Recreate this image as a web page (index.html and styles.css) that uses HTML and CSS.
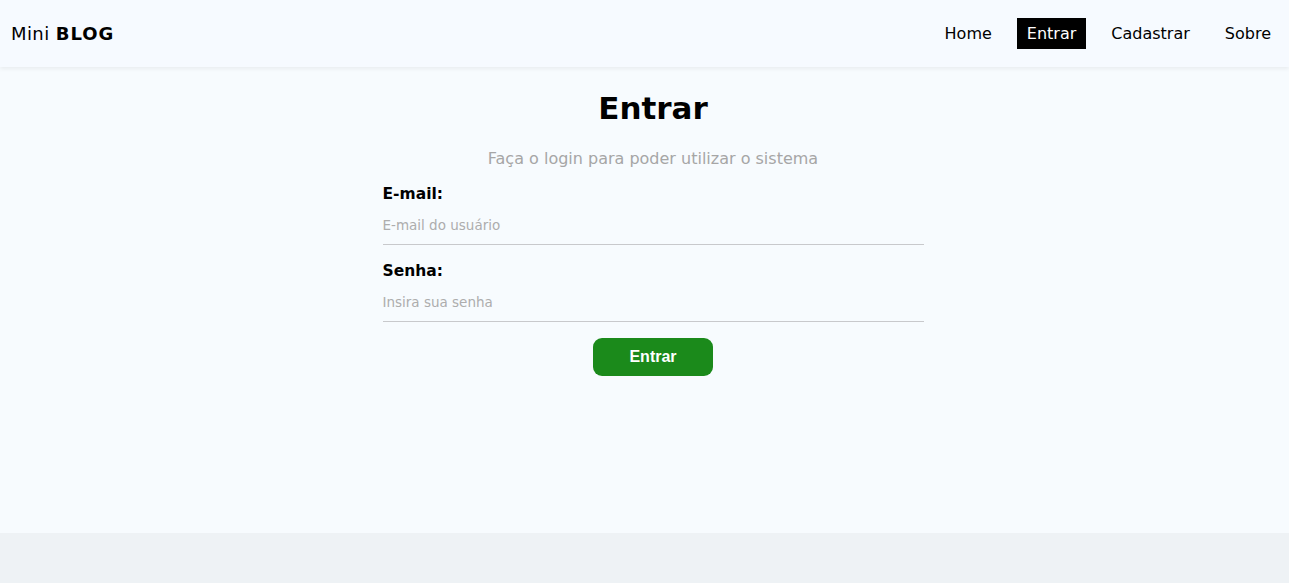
FILE: index.html
```html
<!DOCTYPE html>
<html lang="pt-BR">
<head>
<meta charset="utf-8">
<title>Mini Blog</title>
<link rel="stylesheet" href="styles.css">
</head>
<body>
<div class="app">
  <header class="navbar">
    <a class="brand" href="#">Mini <span>BLOG</span></a>
    <nav class="links">
      <a href="#">Home</a>
      <a href="#" class="active">Entrar</a>
      <a href="#">Cadastrar</a>
      <a href="#">Sobre</a>
    </nav>
  </header>
  <main class="container">
    <div class="login">
      <h1>Entrar</h1>
      <p class="sub">Faça o login para poder utilizar o sistema</p>
      <form class="form">
        <label class="field">
          <span>E-mail:</span>
          <input type="email" placeholder="E-mail do usuário">
        </label>
        <label class="field">
          <span>Senha:</span>
          <input type="password" placeholder="Insira sua senha">
        </label>
        <button type="button" class="btn">Entrar</button>
      </form>
    </div>
  </main>
</div>
</body>
</html>
```
FILE: styles.css
```css
* { box-sizing: border-box; }
html, body { margin: 0; padding: 0; }
body {
  background: #eef2f5;
  font-family: "DejaVu Sans", "Open Sans", sans-serif;
  color: #000;
}
.app {
  background: #f7fbfe;
  height: 533px;
}
.navbar {
  height: 67px;
  display: flex;
  align-items: center;
  justify-content: space-between;
  padding: 0 8px 0 11px;
  background: #f6faff;
  box-shadow: 0 2px 4px rgba(0,0,0,0.06);
}
.brand {
  color: #000;
  text-decoration: none;
  font-size: 18px;
  letter-spacing: 0.4px;
}
.brand span { font-weight: 900; letter-spacing: 1px; }
.links { display: flex; gap: 15px; }
.links a {
  color: #000;
  text-decoration: none;
  font-size: 16px;
  padding: 6px 10px;
  line-height: 19px;
}
.links a.active { background: #000; color: #fff; }
.container {
  display: flex;
  justify-content: center;
  padding-left: 17px;
}
.login {
  width: 541px;
  text-align: center;
}
h1 {
  margin: 21px 0 0;
  font-size: 31px;
  line-height: 40px;
  font-weight: 700;
}
.sub {
  margin: 20px 0 0;
  color: #a6a6a6;
  font-size: 16px;
  line-height: 22px;
}
.form {
  display: flex;
  flex-direction: column;
  align-items: center;
  margin-top: 14px;
}
.field {
  width: 100%;
  display: flex;
  flex-direction: column;
  text-align: left;
}
.field span {
  font-weight: 700;
  font-size: 15.5px;
  line-height: 20px;
}
.field input {
  border: none;
  border-bottom: 1px solid #c8c9cc;
  background: transparent;
  font-family: inherit;
  font-size: 13.5px;
  padding: 13px 0 11px;
  outline: none;
  margin-bottom: 16px;
}
.field input::placeholder { color: #adadad; }
.btn {
  margin-top: 0;
  width: 120px;
  height: 38px;
  border: none;
  border-radius: 9px;
  background: #1b8a1b;
  color: #fff;
  font-family: "Liberation Sans", Arial, sans-serif;
  font-weight: 700;
  font-size: 16px;
}
```
